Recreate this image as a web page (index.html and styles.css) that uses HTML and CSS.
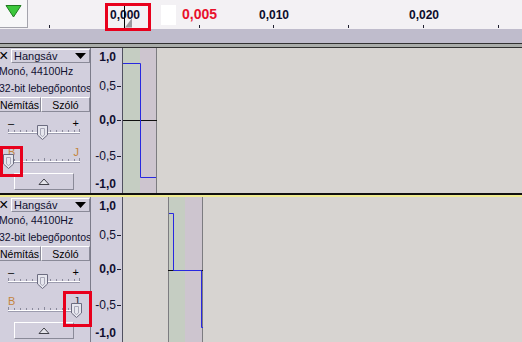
FILE: index.html
```html
<!DOCTYPE html>
<html lang="hu">
<head>
    <meta charset="UTF-8">
    <meta name="viewport" content="width=device-width, initial-scale=1.0">
    <title>Hangsávok</title>
    <link rel="stylesheet" href="styles.css">
</head>
<body>
<div class="app">

    <!-- idővonalzó -->
    <div class="timeline">
        <div class="corner">
            <svg width="17" height="14" viewBox="0 0 17 14"><path d="M1 1.5 H16 L8.5 13 Z" fill="#3cc83c" stroke="#207a20"/></svg>
        </div>
        <span class="tk tk1"></span>
        <span class="tk tk3"></span>
        <span class="tk tk4"></span>
        <span class="tk tk5"></span>
        <span class="tk tk6"></span>
        <span class="tk tk7"></span>
        <span class="blank"></span>
        <span class="lbl lbl-0">0,000</span>
        <span class="lbl lbl-5">0,005</span>
        <span class="lbl lbl-10">0,010</span>
        <span class="lbl lbl-20">0,020</span>
        <svg class="cursor" width="9" height="26" viewBox="0 0 9 26"><line x1="0.5" y1="0" x2="0.5" y2="25" stroke="#000"/><path d="M1 24.5 H8 V15 Z" fill="#9a9aa0"/></svg>
    </div>
    <div class="band"></div>
    <div class="edge"></div>

    <!-- 1. sáv -->
    <div class="track">
        <div class="info">
            <div class="title-row">
                <span class="close">×</span>
                <div class="title">Hangsáv<svg width="11" height="6" viewBox="0 0 11 6"><path d="M0 0 H11 L5.5 6 Z" fill="#000"/></svg></div>
            </div>
            <div class="meta">Monó, 44100Hz</div>
            <div class="meta">32-bit lebegőpontos</div>
            <div class="btns">
                <div class="btn mute">Némítás</div>
                <div class="btn solo">Szóló</div>
            </div>
            <div class="slider gain">
                <div class="slider-labels"><span>–</span><span>+</span></div>
                <svg width="90" height="18" viewBox="0 0 90 18">
                    <line x1="8" y1="7.5" x2="80" y2="7.5" stroke="#fff"/>
                    <line x1="8" y1="8.5" x2="80" y2="8.5" stroke="#9c9cae"/>
                    <path d="M8.5 4v3M14.5 5v2M20.5 5v2M26.5 5v2M32.5 5v2M38.5 5v2M50.5 5v2M56.5 5v2M62.5 5v2M68.5 5v2M74.5 5v2M79.5 4v3" stroke="#8a8a9c"/>
                    <g transform="translate(37 0)">
                        <path d="M0.5 0.5 H10.5 V10 L5.5 14.5 L0.5 10 Z" fill="#e6e6ee" stroke="#6c6c80"/>
                        <path d="M3.5 3.5 H7.5 V10 L5.5 11.5 L3.5 10 Z" fill="none" stroke="#a8a8b8"/>
                    </g>
                </svg>
            </div>
            <div class="slider pan">
                <div class="slider-labels"><span class="lr">B</span><span class="lr">J</span></div>
                <svg width="90" height="18" viewBox="0 0 90 18">
                    <line x1="8" y1="7.5" x2="80" y2="7.5" stroke="#fff"/>
                    <line x1="8" y1="8.5" x2="80" y2="8.5" stroke="#9c9cae"/>
                    <path d="M8.5 4v3M14.5 5v2M20.5 5v2M26.5 5v2M32.5 5v2M38.5 5v2M44.5 4v3M50.5 5v2M56.5 5v2M62.5 5v2M68.5 5v2M74.5 5v2M79.5 4v3" stroke="#8a8a9c"/>
                    <g transform="translate(3 0)">
                        <path d="M0.5 0.5 H10.5 V10 L5.5 14.5 L0.5 10 Z" fill="#e6e6ee" stroke="#6c6c80"/>
                        <path d="M3.5 3.5 H7.5 V10 L5.5 11.5 L3.5 10 Z" fill="none" stroke="#a8a8b8"/>
                    </g>
                </svg>
            </div>
            <div class="collapse"><svg width="12" height="7" viewBox="0 0 12 7"><path d="M1 6.5 H11 L6 1 Z" fill="#e4e4ea" stroke="#404048"/></svg></div>
        </div>
        <div class="vruler">
            <div class="vl strong">1,0<i></i></div>
            <div class="vl">0,5<i></i></div>
            <div class="vl strong">0,0<i></i></div>
            <div class="vl">-0,5<i></i></div>
            <div class="vl strong">-1,0<i></i></div>
        </div>
        <div class="wave">
            <svg width="399" height="145" viewBox="0 0 399 145">
                <rect x="0" y="0" width="17" height="145" fill="#c5cdc2"/>
                <rect x="17" y="0" width="17" height="145" fill="#cdc5cf"/>
                <line x1="33.5" y1="0" x2="33.5" y2="145" stroke="#7c7c80"/>
                <line x1="0" y1="72.5" x2="34" y2="72.5" stroke="#101010"/>
                <path d="M0 15.5 H17.5 V129.5 H33" fill="none" stroke="#2828e0"/>
            </svg>
        </div>
    </div>

    <div class="divider"></div>

    <!-- 2. sáv -->
    <div class="track">
        <div class="info">
            <div class="title-row">
                <span class="close">×</span>
                <div class="title">Hangsáv<svg width="11" height="6" viewBox="0 0 11 6"><path d="M0 0 H11 L5.5 6 Z" fill="#000"/></svg></div>
            </div>
            <div class="meta">Monó, 44100Hz</div>
            <div class="meta">32-bit lebegőpontos</div>
            <div class="btns">
                <div class="btn mute">Némítás</div>
                <div class="btn solo">Szóló</div>
            </div>
            <div class="slider gain">
                <div class="slider-labels"><span>–</span><span>+</span></div>
                <svg width="90" height="18" viewBox="0 0 90 18">
                    <line x1="8" y1="7.5" x2="80" y2="7.5" stroke="#fff"/>
                    <line x1="8" y1="8.5" x2="80" y2="8.5" stroke="#9c9cae"/>
                    <path d="M8.5 4v3M14.5 5v2M20.5 5v2M26.5 5v2M32.5 5v2M38.5 5v2M50.5 5v2M56.5 5v2M62.5 5v2M68.5 5v2M74.5 5v2M79.5 4v3" stroke="#8a8a9c"/>
                    <g transform="translate(37 0)">
                        <path d="M0.5 0.5 H10.5 V10 L5.5 14.5 L0.5 10 Z" fill="#e6e6ee" stroke="#6c6c80"/>
                        <path d="M3.5 3.5 H7.5 V10 L5.5 11.5 L3.5 10 Z" fill="none" stroke="#a8a8b8"/>
                    </g>
                </svg>
            </div>
            <div class="slider pan">
                <div class="slider-labels"><span class="lr">B</span><span class="dark">J</span></div>
                <svg width="90" height="18" viewBox="0 0 90 18">
                    <line x1="8" y1="7.5" x2="80" y2="7.5" stroke="#fff"/>
                    <line x1="8" y1="8.5" x2="80" y2="8.5" stroke="#9c9cae"/>
                    <path d="M8.5 4v3M14.5 5v2M20.5 5v2M26.5 5v2M32.5 5v2M38.5 5v2M44.5 4v3M50.5 5v2M56.5 5v2M62.5 5v2M68.5 5v2M74.5 5v2M79.5 4v3" stroke="#8a8a9c"/>
                    <g transform="translate(71 0)">
                        <path d="M0.5 0.5 H10.5 V10 L5.5 14.5 L0.5 10 Z" fill="#e6e6ee" stroke="#6c6c80"/>
                        <path d="M3.5 3.5 H7.5 V10 L5.5 11.5 L3.5 10 Z" fill="none" stroke="#a8a8b8"/>
                    </g>
                </svg>
            </div>
            <div class="collapse"><svg width="12" height="7" viewBox="0 0 12 7"><path d="M1 6.5 H11 L6 1 Z" fill="#e4e4ea" stroke="#404048"/></svg></div>
        </div>
        <div class="vruler">
            <div class="vl strong">1,0<i></i></div>
            <div class="vl">0,5<i></i></div>
            <div class="vl strong">0,0<i></i></div>
            <div class="vl">-0,5<i></i></div>
            <div class="vl strong">-1,0<i></i></div>
        </div>
        <div class="wave">
            <svg width="399" height="145" viewBox="0 0 399 145">
                <rect x="45" y="0" width="17" height="145" fill="#c5cdc2"/>
                <rect x="62" y="0" width="18" height="145" fill="#cdc5cf"/>
                <line x1="45.5" y1="0" x2="45.5" y2="145" stroke="#7c7c80"/>
                <line x1="79.5" y1="0" x2="79.5" y2="145" stroke="#7c7c80"/>
                <line x1="45" y1="73.5" x2="80" y2="73.5" stroke="#101010"/>
                <path d="M46 16.5 H50.5 V73.5 H78.5 V130.5 H80" fill="none" stroke="#2828e0"/>
            </svg>
        </div>
    </div>

    <!-- kiemelések -->
    <span class="mark mark-ruler"></span>
    <span class="mark mark-pan1"></span>
    <span class="mark mark-pan2"></span>
</div>
</body>
</html>
```

FILE: styles.css
```css
body {
    margin: 0;
    background: #d2cfdd;
    font-family: "Liberation Sans", Arial, sans-serif;
}
.app {
    position: relative;
    width: 522px;
    height: 342px;
    overflow: hidden;
    background: #d2cfdd;
}

/* idővonalzó */
.timeline {
    position: relative;
    height: 29px;
    background: #f3f1f4;
}
.corner {
    width: 28px;
    height: 28px;
    box-sizing: border-box;
    padding-top: 4px;
    display: flex;
    justify-content: center;
    align-items: flex-start;
    background: #f7f7f8;
    border-right: 1px solid #a4a4ac;
    border-bottom: 1px solid #a4a4ac;
}
.tk {
    position: absolute;
    top: 25px;
    width: 1px;
    height: 3px;
    background: #202030;
}
.tk1 { left: 49px; }
.tk3 { left: 199px; }
.tk4 { left: 273px; }
.tk5 { left: 348px; }
.tk6 { left: 423px; }
.tk7 { left: 498px; }
.blank {
    position: absolute;
    left: 161px;
    top: 5px;
    width: 15px;
    height: 20px;
    background: #fff;
}
.lbl {
    position: absolute;
    top: 8px;
    font-size: 12px;
    font-weight: bold;
    color: #0c0c2c;
    line-height: 14px;
}
.lbl-0 { left: 110px; }
.lbl-5 { left: 182px; top: 7px; font-size: 14px; color: #e8102c; }
.lbl-10 { left: 259px; }
.lbl-20 { left: 409px; }
.cursor {
    position: absolute;
    left: 124px;
    top: 3px;
}
.band {
    height: 14px;
    background: #bfbccc;
}
.edge {
    height: 3px;
    background: #a9aca9;
    border-top: 1px solid #303030;
    border-bottom: 1px solid #303030;
}

/* sávok */
.track {
    display: flex;
    height: 145px;
}
.divider {
    height: 2px;
    background: #101010;
    border-bottom: 2px solid #f0ec90;
}
.info {
    width: 90px;
    flex: none;
    border-right: 1px solid #7c7c8a;
    display: flex;
    flex-direction: column;
    font-size: 10.5px;
    color: #000;
    overflow: hidden;
}
.title-row {
    display: flex;
    height: 14px;
    margin-top: 1px;
}
.close {
    width: 11px;
    font-size: 16px;
    line-height: 13px;
    text-indent: -1px;
}
.title {
    flex: 1;
    display: flex;
    justify-content: space-between;
    align-items: center;
    padding: 0 3px 0 2px;
    border-top: 1px solid #fff;
    border-left: 1px solid #fff;
    border-right: 1px solid #8a8a98;
    border-bottom: 1px solid #8a8a98;
    color: #101030;
    font-size: 11px;
}
.meta {
    height: 17px;
    line-height: 17px;
    display: flex;
    justify-content: flex-start;
    margin-left: -1px;
    white-space: nowrap;
    color: #101030;
    font-size: 10.5px;
}
.btns {
    display: flex;
    height: 15px;
}
.btn {
    display: flex;
    align-items: center;
    justify-content: center;
    border-top: 1px solid #fff;
    border-left: 1px solid #fff;
    border-right: 1px solid #8a8a98;
    border-bottom: 1px solid #8a8a98;
    box-sizing: border-box;
}
.mute { width: 43px; margin-left: -2px; }
.solo { flex: 1; }
.slider {
    display: flex;
    flex-direction: column;
}
.gain { margin-top: 6px; }
.pan { margin-top: 4px; }
.slider-labels {
    display: flex;
    justify-content: space-between;
    height: 10px;
    line-height: 10px;
    padding: 0 11px 0 8px;
    font-size: 11px;
}
.slider svg {
    display: block;
    margin-top: -3px;
}
.lr { color: #c4843c; }
.dark { color: #303040; }
.collapse {
    align-self: flex-start;
    margin: 1px 0 0 14px;
    width: 60px;
    height: 17px;
    box-sizing: border-box;
    display: flex;
    align-items: center;
    justify-content: center;
    border-top: 1px solid #fff;
    border-left: 1px solid #fff;
    border-right: 1px solid #8a8a98;
    border-bottom: 1px solid #8a8a98;
}

/* függőleges vonalzó */
.vruler {
    width: 31px;
    flex: none;
    border-right: 1px solid #505060;
    display: flex;
    flex-direction: column;
    font-size: 12px;
    color: #101030;
}
.vl {
    height: 14px;
    line-height: 14px;
    display: flex;
    justify-content: flex-end;
    align-items: center;
    padding-right: 1px;
}
.vl i {
    width: 4px;
    height: 1px;
    margin-left: 1px;
    background: #202030;
}
.vl.strong { font-weight: bold; }
.vl:nth-child(1) { margin-top: 2px; }
.vl:nth-child(2) { margin-top: 15px; }
.vl:nth-child(3) { margin-top: 20px; }
.vl:nth-child(4) { margin-top: 22px; }
.vl:nth-child(5) { margin-top: 14px; }
.vl:nth-child(1) i,
.vl:nth-child(5) i { visibility: hidden; }

.wave {
    flex: 1;
    background: #d7d4d1;
}
.wave svg {
    display: block;
}

/* piros kiemelések */
.mark {
    position: absolute;
    border: 3px solid #e8001c;
    box-sizing: border-box;
}
.mark-ruler { left: 105px; top: 3px; width: 46px; height: 28px; }
.mark-pan1 { left: 0; top: 146px; width: 23px; height: 31px; }
.mark-pan2 { left: 63px; top: 291px; width: 29px; height: 36px; }
```
